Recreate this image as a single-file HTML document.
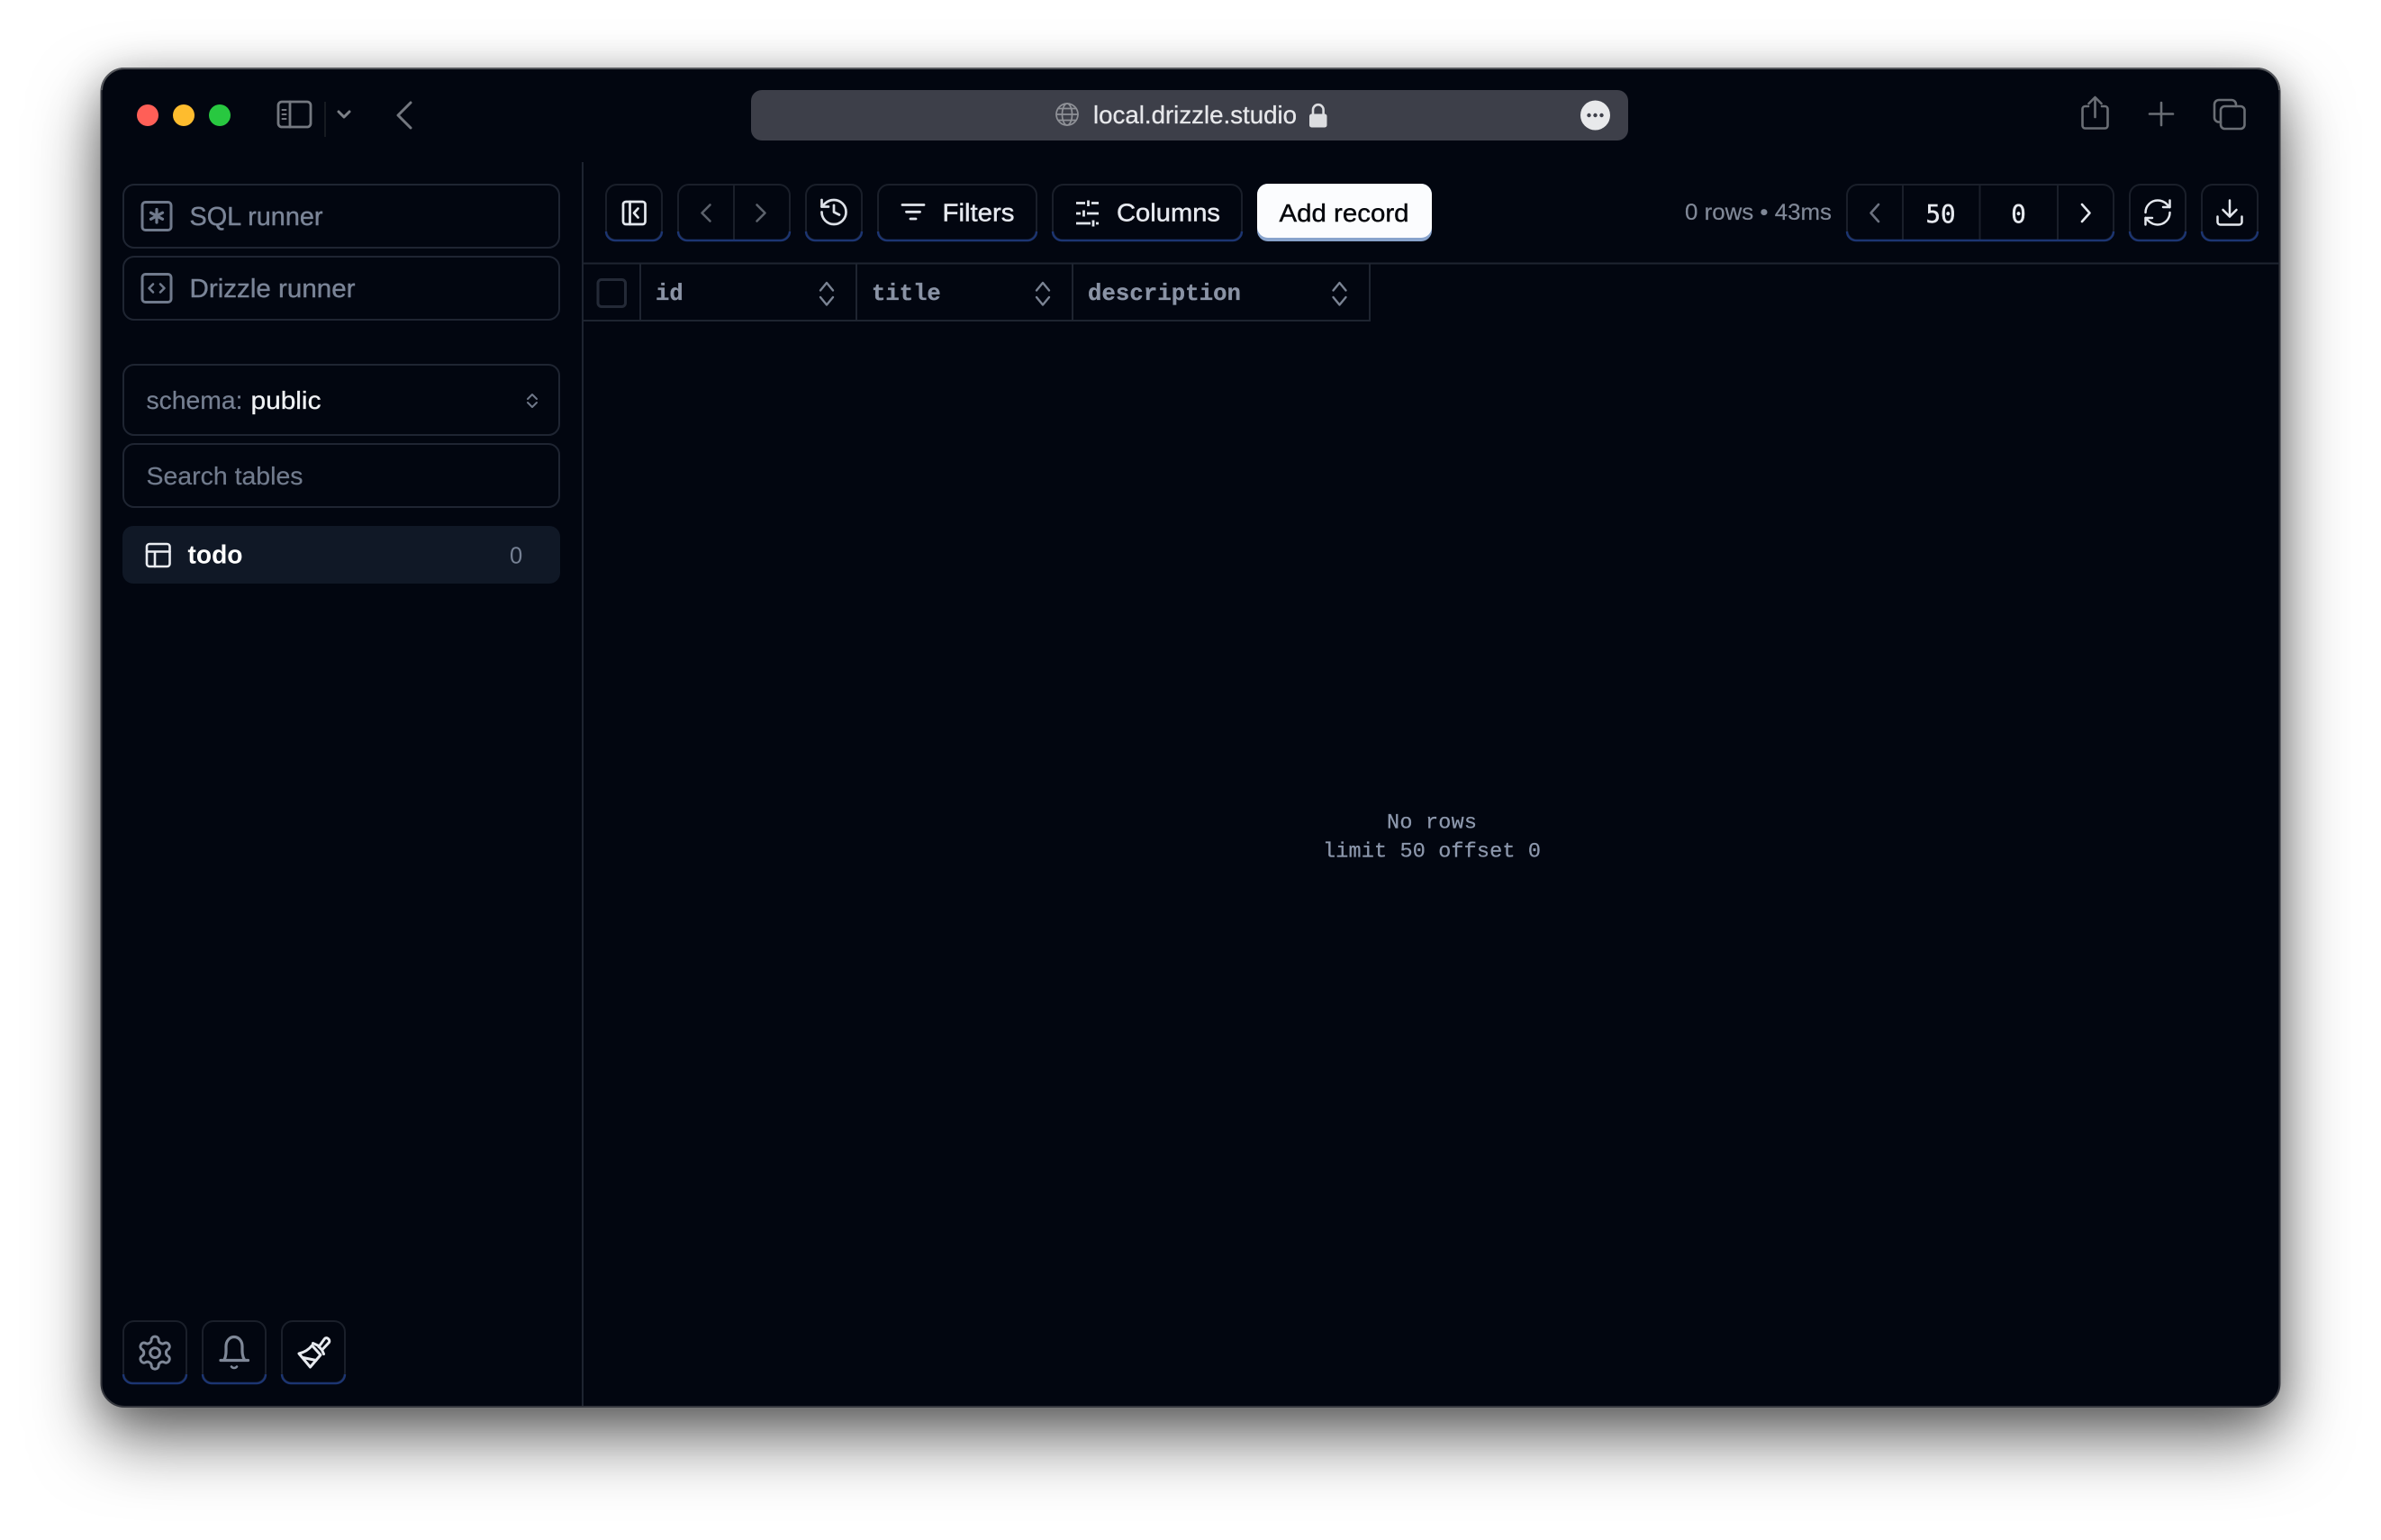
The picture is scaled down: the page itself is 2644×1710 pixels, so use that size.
<!DOCTYPE html>
<html><head><meta charset="utf-8"><title>Drizzle Studio</title>
<style>
html,body{margin:0;padding:0;width:2644px;height:1710px;background:#fff;overflow:hidden}
#win{position:absolute;left:112px;top:76px;width:2420px;height:1486px;border-radius:26px;background:#020610;box-shadow:0 36px 76px rgba(0,0,0,.56),0 8px 44px rgba(0,0,0,.26)}
svg{position:absolute;left:0;top:0}
text{font-family:"Liberation Sans",sans-serif}
.m{font-family:"Liberation Mono",monospace}
.ln{fill:none;stroke-linecap:round;stroke-linejoin:round}
</style></head><body>
<div id="win"></div>
<svg width="2644" height="1710" viewBox="0 0 2644 1710">
<rect x="112.5" y="76" width="2419" height="1486" rx="26" fill="none" stroke="#34363d" stroke-width="2"/>
<path d="M113 100A25 25 0 0 1 138 76H2506A25 25 0 0 1 2531 100" fill="none" stroke="#55575c" stroke-width="2"/>

<!-- traffic -->
<circle cx="164" cy="128" r="12" fill="#ff5f57"/><circle cx="204" cy="128" r="12" fill="#febc2e"/><circle cx="244" cy="128" r="12" fill="#28c840"/>

<!-- title bar left -->
<g class="ln" stroke="#747880" stroke-width="2.8">
<rect x="309" y="113" width="36" height="28" rx="4"/><path d="M322 113V141"/>
<path d="M313.5 122h4M313.5 127h4M313.5 132h4" stroke-width="2"/>
<path d="M376 124l6 6 6-6" stroke-width="3" stroke="#7d8188"/>
<path d="M456 114L442 128 456 142" stroke-width="3"/>
</g>
<path d="M361 113V152" stroke="#1d2027" stroke-width="1.5"/>

<!-- url bar -->
<rect x="834" y="100" width="974" height="56" rx="12" fill="#3d3f49"/>
<g class="ln" stroke="#8f9197" stroke-width="1.7"><circle cx="1185" cy="127" r="12"/><ellipse cx="1185" cy="127" rx="5.5" ry="12"/><path d="M1173 127H1197M1175 120.5H1195M1175 133.5H1195"/></g>
<text x="1214" y="137" font-size="27.5" fill="#e6e7ea" stroke="#e6e7ea" stroke-width=".3" textLength="226" lengthAdjust="spacingAndGlyphs">local.drizzle.studio</text>
<path d="M1458 128V122a5.8 5.8 0 0 1 11.6 0V128" fill="none" stroke="#dcdde0" stroke-width="2.6"/>
<rect x="1454" y="126.5" width="19.5" height="15" rx="2.5" fill="#dcdde0"/>
<circle cx="1771.5" cy="128" r="16.5" fill="#e8e9eb"/>
<g fill="#3d3f49"><circle cx="1764.5" cy="128" r="2.2"/><circle cx="1771.5" cy="128" r="2.2"/><circle cx="1778.5" cy="128" r="2.2"/></g>

<!-- title bar right -->
<g class="ln" stroke="#6a6e75" stroke-width="2.6">
<path d="M2319 118H2315.5a3 3 0 0 0-3 3V139.5a3 3 0 0 0 3 3H2337.5a3 3 0 0 0 3-3V121a3 3 0 0 0-3-3H2334M2326.5 130V108.5M2319.5 115l7-7 7 7"/>
<path d="M2400 114V139M2387 126.5H2413"/>
<rect x="2466" y="118" width="26.5" height="25" rx="4.5"/>
<path d="M2466 135.5h-2a5 5 0 0 1-5-5V116a5 5 0 0 1 5-5h14a5 5 0 0 1 5 5v2"/>
</g>

<!-- structural lines -->
<path d="M647 180V1561" stroke="#1e2430" stroke-width="2"/>
<path d="M648 292.5H2531" stroke="#1e2430" stroke-width="2"/>
<path d="M648 356H1521V293M711 293V356M951 293V356M1191 293V356" fill="none" stroke="#1e2430" stroke-width="2"/>

<!-- sidebar boxes -->
<g fill="none" stroke="#1f2532" stroke-width="2">
<rect x="137" y="205" width="484" height="70" rx="12"/>
<rect x="137" y="285" width="484" height="70" rx="12"/>
<rect x="137" y="405" width="484" height="78" rx="12"/>
<rect x="137" y="493" width="484" height="70" rx="12"/>
</g>
<rect x="136" y="584" width="486" height="64" rx="12" fill="#101826"/>

<g class="ln" stroke="#707a8c" stroke-width="3">
<rect x="158" y="224.5" width="32" height="31" rx="3.5"/>
<path d="M174 232.5V247M167.5 236.200L180.5 243.300M167.5 243.300L180.5 236.200" stroke-width="3.2"/>
<rect x="158" y="304.5" width="32" height="31" rx="3.5"/>
<path d="M170 315.5L165.5 320 170 324.5M178 315.5L182.5 320 178 324.5" stroke-width="2.6"/>
</g>
<text x="210.5" y="250" font-size="28.5" fill="#7a8497" stroke="#7a8497" stroke-width=".4" textLength="148" lengthAdjust="spacingAndGlyphs">SQL runner</text>
<text x="210.5" y="330" font-size="28.5" fill="#7a8497" stroke="#7a8497" stroke-width=".4" textLength="184" lengthAdjust="spacingAndGlyphs">Drizzle runner</text>

<text x="162.5" y="454" font-size="27.5" fill="#768092" stroke="#768092" stroke-width=".2" textLength="107" lengthAdjust="spacingAndGlyphs">schema:</text>
<text x="278.5" y="454" font-size="27.5" fill="#f0f2f5" stroke="#f0f2f5" stroke-width=".3" textLength="78" lengthAdjust="spacingAndGlyphs">public</text>
<path d="M586 443l5-5 5 5M586 447l5 5 5-5" class="ln" stroke="#6f7889" stroke-width="2"/>
<text x="162.5" y="538" font-size="27.5" fill="#717b8d" stroke="#717b8d" stroke-width=".2" textLength="174" lengthAdjust="spacingAndGlyphs">Search tables</text>

<g class="ln" stroke="#e9ecf1" stroke-width="2.6"><rect x="163" y="604" width="25.5" height="25" rx="3"/><path d="M163 612.5H188.5M172 612.5V629"/></g>
<text x="208.5" y="625.5" font-size="29" font-weight="700" fill="#fff" textLength="61" lengthAdjust="spacingAndGlyphs">todo</text>
<text x="566" y="625.5" font-size="25.5" fill="#768194">0</text>

<!-- button frames -->
<g fill="none" stroke="#1a1f2a" stroke-width="2">
<rect x="137" y="1467" width="70" height="69" rx="12"/>
<rect x="225" y="1467" width="70" height="69" rx="12"/>
<rect x="313" y="1467" width="70" height="69" rx="12"/>
<rect x="673" y="205" width="62" height="62" rx="12"/>
<rect x="753" y="205" width="124" height="62" rx="12"/>
<rect x="895" y="205" width="62" height="62" rx="12"/>
<rect x="975" y="205" width="176" height="62" rx="12"/>
<rect x="1169" y="205" width="210" height="62" rx="12"/>
<rect x="2051" y="205" width="296" height="62" rx="12"/>
<rect x="2365" y="205" width="62" height="62" rx="12"/>
<rect x="2445" y="205" width="62" height="62" rx="12"/>
<path d="M815 205V266M2113 205V266M2198.5 205V266M2285 205V266"/>
</g>
<g fill="none" stroke="#1c3572" stroke-width="2.4">
<path d="M137 1526a10 10 0 0 0 10 10H197a10 10 0 0 0 10-10"/>
<path d="M225 1526a10 10 0 0 0 10 10H285a10 10 0 0 0 10-10"/>
<path d="M313 1526a10 10 0 0 0 10 10H373a10 10 0 0 0 10-10"/>
<path d="M673 257a10 10 0 0 0 10 10H725a10 10 0 0 0 10-10"/>
<path d="M753 257a10 10 0 0 0 10 10H867a10 10 0 0 0 10-10"/>
<path d="M895 257a10 10 0 0 0 10 10H947a10 10 0 0 0 10-10"/>
<path d="M975 257a10 10 0 0 0 10 10H1141a10 10 0 0 0 10-10"/>
<path d="M1169 257a10 10 0 0 0 10 10H1369a10 10 0 0 0 10-10"/>
<path d="M2051 257a10 10 0 0 0 10 10H2337a10 10 0 0 0 10-10"/>
<path d="M2365 257a10 10 0 0 0 10 10H2417a10 10 0 0 0 10-10"/>
<path d="M2445 257a10 10 0 0 0 10 10H2497a10 10 0 0 0 10-10"/>
</g>
<!-- add record -->
<rect x="1396" y="204" width="194" height="64" rx="12" fill="#88a3cc"/>
<rect x="1396" y="204" width="194" height="60" rx="12" fill="#fbfcfe"/>
<text x="1420.5" y="246" font-size="28" fill="#05070c" stroke="#05070c" stroke-width=".4" textLength="144" lengthAdjust="spacingAndGlyphs">Add record</text>

<!-- toolbar icons -->
<g class="ln" stroke="#e4e8ee" stroke-width="2.7">
<rect x="692" y="224" width="24.5" height="25" rx="3"/><path d="M699.5 224V249M708.5 231.5L704 236.5 708.5 241.5"/>
</g>
<path d="M788.5 227.5L779.5 236.5 788.5 245.5" class="ln" stroke="#5c626c" stroke-width="2.6"/>
<path d="M840.5 227.5L849.5 236.5 840.5 245.5" class="ln" stroke="#5c626c" stroke-width="2.6"/>
<g transform="translate(908 217.5) scale(1.5)" class="ln" stroke="#dde1e8" stroke-width="1.8">
<path d="M3 12a9 9 0 1 0 9-9 9.75 9.75 0 0 0-6.74 2.74L3 8"/><path d="M3 3v5h5"/><path d="M12 7v5l4 2"/>
</g>
<g stroke="#dfe3ea" stroke-width="2.8" stroke-linecap="round" fill="none">
<path d="M1002 227.5H1026M1006.5 235.3H1021.5M1011 243H1017"/>
<path d="M1195 225.5H1205M1212 225.5H1220M1208.5 222.5V229M1195 237H1200M1207 237H1220M1203.5 233.5V240.5M1195 248H1211M1217 248H1220M1214 244.5V251.5" stroke-linecap="butt"/>
</g>
<text x="1046.5" y="245.5" font-size="28" fill="#e6e9ef" stroke="#e6e9ef" stroke-width=".45" textLength="80" lengthAdjust="spacingAndGlyphs">Filters</text>
<text x="1240" y="245.5" font-size="28" fill="#e6e9ef" stroke="#e6e9ef" stroke-width=".45" textLength="115" lengthAdjust="spacingAndGlyphs">Columns</text>
<text x="1871" y="244" font-size="25" fill="#808897" stroke="#808897" stroke-width=".2" textLength="163" lengthAdjust="spacingAndGlyphs">0 rows • 43ms</text>

<path d="M2086 227L2077.5 236.5 2086 246" class="ln" stroke="#6c7280" stroke-width="2.6"/>
<path d="M2312 227L2320.5 236.5 2312 246" class="ln" stroke="#e4e8ee" stroke-width="2.6"/>
<text x="2155" y="247" font-size="27.5" text-anchor="middle" fill="#e6e9ef" stroke="#e6e9ef" stroke-width=".4" style="font-family:'DejaVu Sans Mono',monospace">50</text>
<text x="2241.5" y="247" font-size="27.5" text-anchor="middle" fill="#e6e9ef" stroke="#e6e9ef" stroke-width=".4" style="font-family:'DejaVu Sans Mono',monospace">0</text>

<g transform="translate(2378 218) scale(1.5)" class="ln" stroke="#e4e8ee" stroke-width="1.65">
<path d="M3 12a9 9 0 0 1 9-9 9.75 9.75 0 0 1 6.74 2.74L21 8"/><path d="M21 3v5h-5"/><path d="M21 12a9 9 0 0 1-9 9 9.75 9.75 0 0 1-6.74-2.74L3 16"/><path d="M8 16H3v5"/>
</g>
<g transform="translate(2458 218) scale(1.5)" class="ln" stroke="#e4e8ee" stroke-width="1.65">
<path d="M21 15v4a2 2 0 0 1-2 2H5a2 2 0 0 1-2-2v-4"/><path d="M7 10l5 5 5-5"/><path d="M12 15V3"/>
</g>

<!-- table header -->
<rect x="664" y="310.5" width="30.5" height="30" rx="4" fill="none" stroke="#242a37" stroke-width="3"/>
<g font-size="25.6" font-weight="700" fill="#8a93a5" stroke="#8a93a5" stroke-width=".3">
<text class="m" x="728" y="333">id</text>
<text class="m" x="968" y="333">title</text>
<text class="m" x="1208" y="333" textLength="170">description</text>
</g>
<g class="ln" stroke="#7a8393" stroke-width="2.4">
<path d="M911 322.5l7-8.5 7 8.5M911 330l7 8.5 7-8.5"/>
<path d="M1151 322.5l7-8.5 7 8.5M1151 330l7 8.500 7-8.500"/>
<path d="M1480.5 322.5l7-8.5 7 8.5M1480.5 330l7 8.5 7-8.5"/>
</g>

<!-- empty -->
<text class="m" x="1540" y="919.500" font-size="23.5" fill="#8d98ad" stroke="#8d98ad" stroke-width=".25" textLength="100">No rows</text>
<text class="m" x="1469" y="951.500" font-size="23.5" fill="#8d98ad" stroke="#8d98ad" stroke-width=".25" textLength="242">limit 50 offset 0</text>

<!-- bottom icons -->
<g transform="translate(150.5 1480.5) scale(1.8)" class="ln" stroke="#7f8898" stroke-width="1.65">
<path d="M12.22 2h-.44a2 2 0 0 0-2 2v.18a2 2 0 0 1-1 1.73l-.43.25a2 2 0 0 1-2 0l-.15-.08a2 2 0 0 0-2.73.73l-.22.38a2 2 0 0 0 .73 2.73l.15.1a2 2 0 0 1 1 1.72v.51a2 2 0 0 1-1 1.74l-.15.09a2 2 0 0 0-.73 2.73l.22.38a2 2 0 0 0 2.73.73l.15-.08a2 2 0 0 1 2 0l.43.25a2 2 0 0 1 1 1.73V20a2 2 0 0 0 2 2h.44a2 2 0 0 0 2-2v-.18a2 2 0 0 1 1-1.73l.43-.25a2 2 0 0 1 2 0l.15.08a2 2 0 0 0 2.73-.73l.22-.39a2 2 0 0 0-.73-2.73l-.15-.08a2 2 0 0 1-1-1.74v-.5a2 2 0 0 1 1-1.74l.15-.09a2 2 0 0 0 .73-2.73l-.22-.38a2 2 0 0 0-2.73-.73l-.15.08a2 2 0 0 1-2 0l-.43-.25a2 2 0 0 1-1-1.73V4a2 2 0 0 0-2-2z"/>
<circle cx="12" cy="12" r="3"/>
</g>
<g class="ln" stroke="#7f8898" stroke-width="3">
<path d="M245 1510.5H275.5M249 1510C251.5 1505 251 1500 251 1495C251 1489 255 1484.5 260 1484.5C265 1484.5 269 1489 269 1495C269 1500 268.5 1505 271.5 1510" stroke-width="3.2"/>
<path d="M257 1517.5C258.5 1519.5 261.5 1519.5 263 1517.5" stroke-width="2.6"/>
</g>
<g class="ln" stroke="#e8ebf0" stroke-width="3">
<path d="M332 1503L344.5 1518 356 1504.5 346.5 1494C343 1498.500 338 1501.500 332 1503Z"/>
<path d="M336.5 1507.500L351 1510.500"/>
<path d="M347.500 1491.500L353 1494 357.500 1499 359.500 1503.500"/>
<path d="M354 1495.500L360.500 1486.500C362.500 1484 367 1487.500 365.500 1490.500L358 1498.500"/>
</g>
</svg>
</body></html>
